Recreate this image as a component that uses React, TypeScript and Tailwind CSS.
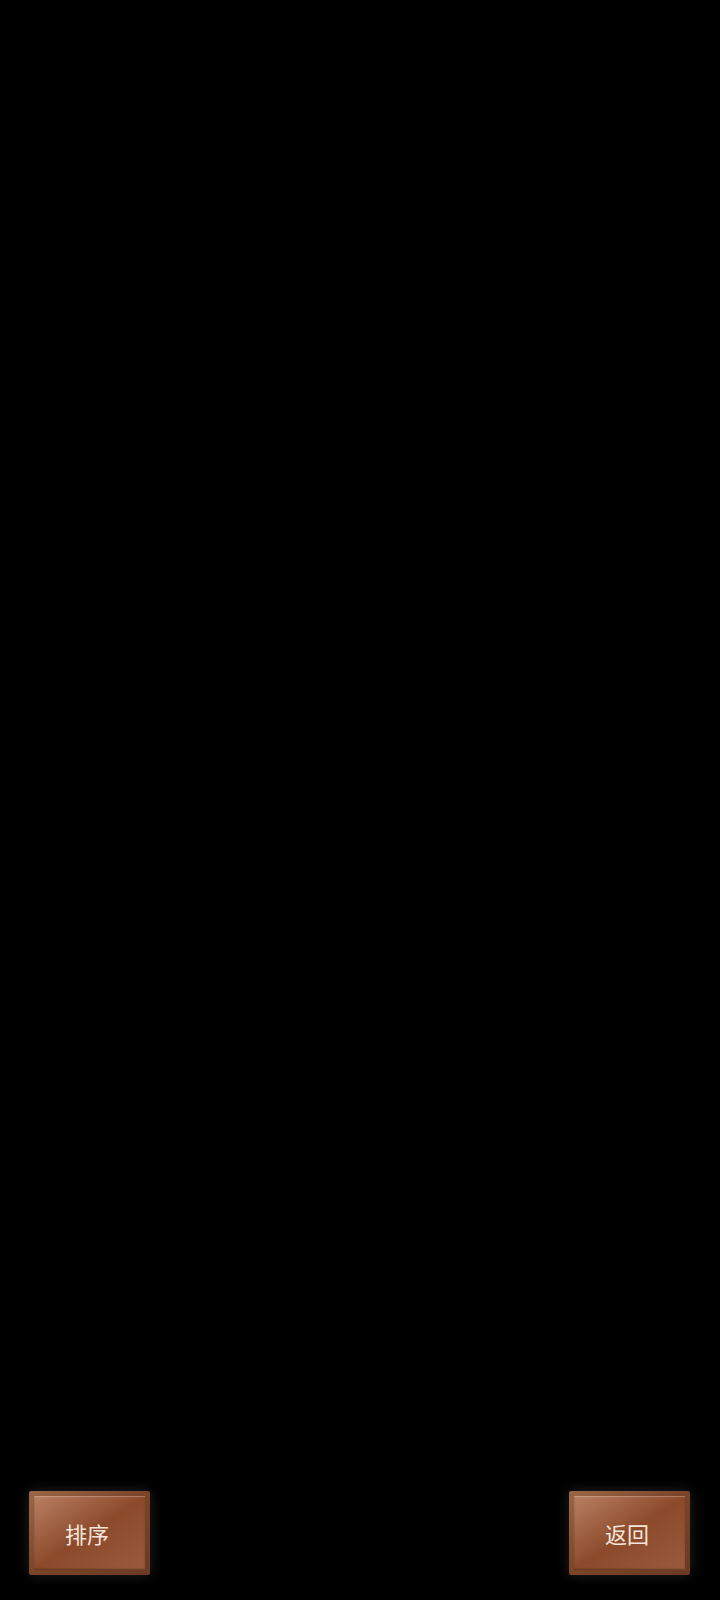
export default function App() {
  return (
    <div className="h-[1600px] w-[720px] bg-black flex flex-col justify-end">
      <div className="flex justify-between pl-[29px] pr-[30px] pb-[25px]">
        <WoodButton label="排序" />
        <WoodButton label="返回" />
      </div>
    </div>
  );
}

function WoodButton({ label }: { label: string }) {
  return (
    <button className="w-[121px] h-[84px] p-[5px] rounded-[2px] bg-gradient-to-br from-[#9a6648] via-[#7b4429] to-[#6a3a22] shadow-[0_0_14px_rgba(255,255,255,0.13)]">
      <div className="w-full h-full flex items-center justify-center bg-gradient-to-br from-[#b98064] via-[#8c4a2b] to-[#9a5a3c] shadow-[inset_0_1px_1px_rgba(255,220,200,0.35),inset_0_-1px_2px_rgba(0,0,0,0.35)]">
        <span className="text-[22px] text-[#f4e6da] font-['Noto_Sans_CJK_SC',sans-serif] mt-[1px] mr-[5px]">
          {label}
        </span>
      </div>
    </button>
  );
}
